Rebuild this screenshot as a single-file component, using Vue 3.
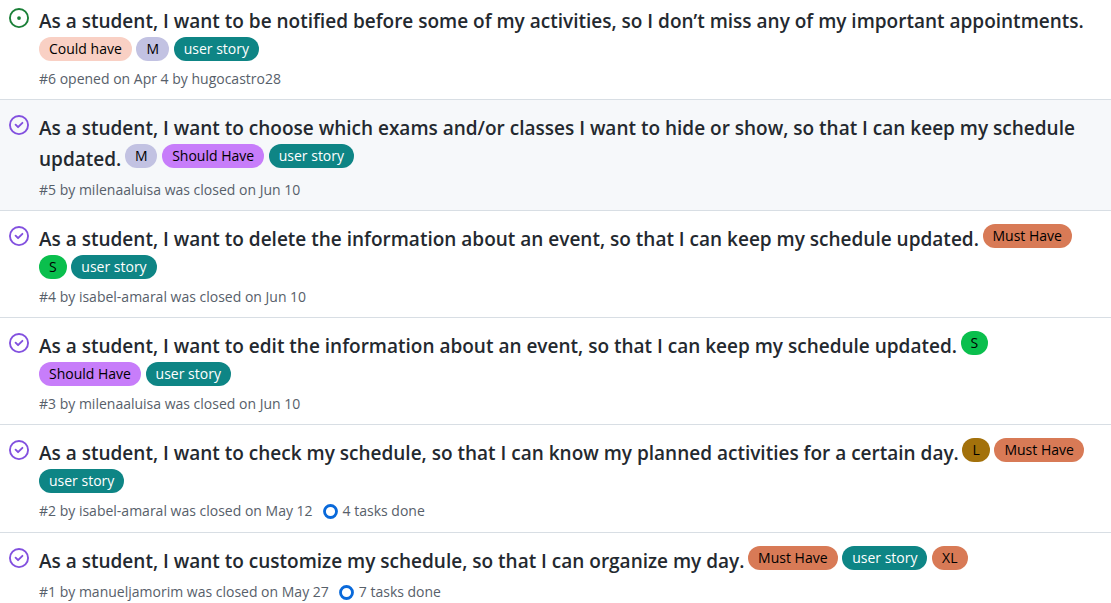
<script setup>
const could = { text: 'Could have', tone: 'peach' }
const should = { text: 'Should Have', tone: 'violet' }
const must = { text: 'Must Have', tone: 'coral' }
const story = { text: 'user story', tone: 'teal' }
const small = { text: 'S', tone: 'green' }
const medium = { text: 'M', tone: 'lavender' }
const large = { text: 'L', tone: 'ochre' }
const extraLarge = { text: 'XL', tone: 'coral' }

const issues = [
  {
    id: 6,
    open: true,
    title: 'As a student, I want to be notified before some of my activities, so I don’t miss any of my important appointments.',
    labels: [could, medium, story],
    before: 'opened on Apr 4 by',
    author: 'hugocastro28',
    after: '',
  },
  {
    id: 5,
    active: true,
    title: 'As a student, I want to choose which exams and/or classes I want to hide or show, so that I can keep my schedule updated.',
    labels: [medium, should, story],
    before: 'by',
    author: 'milenaaluisa',
    after: 'was closed on Jun 10',
  },
  {
    id: 4,
    title: 'As a student, I want to delete the information about an event, so that I can keep my schedule updated.',
    labels: [must, small, story],
    before: 'by',
    author: 'isabel-amaral',
    after: 'was closed on Jun 10',
  },
  {
    id: 3,
    title: 'As a student, I want to edit the information about an event, so that I can keep my schedule updated.',
    labels: [small, should, story],
    before: 'by',
    author: 'milenaaluisa',
    after: 'was closed on Jun 10',
  },
  {
    id: 2,
    title: 'As a student, I want to check my schedule, so that I can know my planned activities for a certain day.',
    labels: [large, must, story],
    before: 'by',
    author: 'isabel-amaral',
    after: 'was closed on May 12',
    tasks: 4,
  },
  {
    id: 1,
    title: 'As a student, I want to customize my schedule, so that I can organize my day.',
    labels: [must, story, extraLarge],
    before: 'by',
    author: 'manueljamorim',
    after: 'was closed on May 27',
    tasks: 7,
  },
]
</script>

<template>
  <ul class="issues">
    <li v-for="issue in issues" :key="issue.id" class="issue" :class="{ active: issue.active }">
      <svg v-if="issue.open" class="state open" viewBox="0 0 16 16" role="img" aria-label="Open issue">
        <path d="M8 9.5a1.5 1.5 0 1 0 0-3 1.5 1.5 0 0 0 0 3Z" />
        <path d="M8 0a8 8 0 1 1 0 16A8 8 0 0 1 8 0ZM1.5 8a6.5 6.5 0 1 0 13 0 6.5 6.5 0 0 0-13 0Z" />
      </svg>
      <svg v-else class="state closed" viewBox="0 0 16 16" role="img" aria-label="Closed issue">
        <path d="M11.28 6.78a.75.75 0 0 0-1.06-1.06L7.25 8.69 5.78 7.22a.75.75 0 0 0-1.06 1.06l2 2a.75.75 0 0 0 1.06 0l3.5-3.5Z" />
        <path d="M16 8A8 8 0 1 1 0 8a8 8 0 0 1 16 0Zm-1.5 0a6.5 6.5 0 1 0-13 0 6.5 6.5 0 0 0 13 0Z" />
      </svg>
      <div class="body">
        <div class="heading">
          <a class="title" href="#">{{ issue.title }}</a>
          {{ ' ' }}
          <template v-for="label in issue.labels" :key="label.text">
            <a class="label" :class="label.tone" href="#">{{ label.text }}</a>{{ ' ' }}
          </template>
        </div>
        <div class="meta">
          <span>#{{ issue.id }} {{ issue.before }} <a class="author" href="#">{{ issue.author }}</a> {{ issue.after }}</span>
          <span v-if="issue.tasks" class="tasks">
            <svg class="ring" viewBox="0 0 16 16" aria-hidden="true">
              <circle cx="8" cy="8" r="6.4" />
            </svg>
            {{ issue.tasks }} tasks done
          </span>
        </div>
      </div>
    </li>
  </ul>
</template>

<style>
body {
  margin: 0;
  background: #ffffff;
}
</style>

<style scoped>
.issues {
  margin: 0;
  padding: 0;
  list-style: none;
  font-family: "Segoe UI", "Open Sans", "Noto Sans", sans-serif;
  font-size: 14px;
  color: #57606a;
}

.issue {
  display: flex;
  gap: 10px;
  padding: 13px 24px 8px 9px;
  border-top: 1px solid #d8dee4;
}

.issue:first-child {
  padding-top: 6px;
  border-top: 0;
}

.issue.active {
  background: #f6f8fa;
}

.state {
  flex: none;
  width: 20px;
  height: 20px;
  margin-top: 2px;
  fill: currentColor;
}

.open {
  color: #1a7f37;
}

.closed {
  color: #8250df;
}

.body {
  flex: 1;
  min-width: 0;
}

.heading {
  line-height: 24px;
}

.title {
  color: #24292f;
  font-size: 19px;
  font-weight: 600;
  line-height: 31px;
  text-decoration: none;
}

.label {
  display: inline-block;
  margin: 0 1px 3px 0;
  padding: 0 10px;
  border-radius: 12px;
  line-height: 24px;
  white-space: nowrap;
  vertical-align: top;
  text-decoration: none;
  color: #000000;
}

.peach { background: #f9d0c4; }
.lavender { background: #c2c2e2; }
.teal { background: #0e8585; color: #ffffff; }
.violet { background: #c77dfa; }
.coral { background: #d87a56; }
.green { background: #0abf4d; }
.ochre { background: #a3710b; }

.meta {
  display: flex;
  gap: 10px;
  margin-top: 3px;
  line-height: 24px;
}

.author {
  color: inherit;
  text-decoration: none;
}

.tasks {
  display: inline-flex;
  align-items: center;
  gap: 5px;
  padding-bottom: 1px;
}

.ring {
  width: 15px;
  height: 15px;
  fill: none;
  stroke: #0969da;
  stroke-width: 3;
}
</style>
